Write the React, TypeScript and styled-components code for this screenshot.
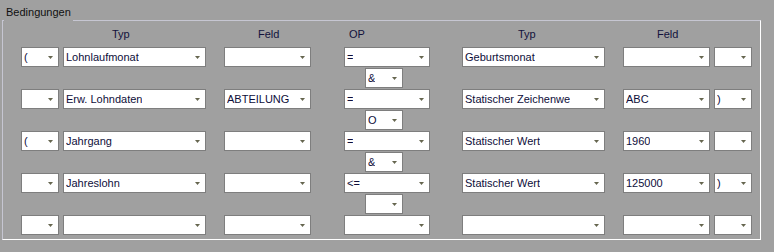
import * as React from 'react';
import styled, { createGlobalStyle } from 'styled-components';

const GlobalStyle = createGlobalStyle`
  html, body {
    margin: 0;
    padding: 0;
    background: #a0a0a0;
  }
  body {
    font-family: 'Liberation Sans', Arial, sans-serif;
    font-size: 11px;
  }
`;

const Page = styled.div`
  width: 774px;
  height: 252px;
  padding: 20px 0 0 2px;
  box-sizing: border-box;
  background: #a0a0a0;
`;

const GroupBox = styled.section`
  position: relative;
  width: 759px;
  height: 220px;
  box-sizing: border-box;
  border-top: 1px solid #c6c6d2;
  border-left: 1px solid #c6c6d2;
  border-right: 1px solid #ffffff;
  border-bottom: 1px solid #ffffff;
  padding-top: 7px;
`;

const GroupTitle = styled.div`
  position: absolute;
  top: -15px;
  left: 1px;
  padding: 0 2px 3px 2px;
  line-height: 13px;
  color: #101010;
  background: #a0a0a0;
`;

const HeaderRow = styled.div`
  display: flex;
  height: 13px;
  margin-bottom: 6px;
`;

const HeaderCell = styled.div<{ $w: number; $ml: number; $indent: number }>`
  width: ${(p) => p.$w}px;
  margin-left: ${(p) => p.$ml}px;
  padding-left: ${(p) => p.$indent}px;
  box-sizing: border-box;
  line-height: 13px;
  color: #12123c;
  white-space: nowrap;
`;

const Rows = styled.div`
  display: flex;
  flex-direction: column;
  gap: 1px;
`;

const Row = styled.div`
  display: flex;
  height: 20px;
`;

const Combo = styled.div<{ $w: number; $ml: number }>`
  position: relative;
  width: ${(p) => p.$w}px;
  margin-left: ${(p) => p.$ml}px;
  height: 20px;
  box-sizing: border-box;
  border: 1px solid #7e7e7e;
  background: #ffffff;
  display: flex;
  align-items: center;
  padding: 0 14px 1px 2px;
`;

const ComboText = styled.span`
  color: #0e0e3a;
  line-height: 14px;
  white-space: nowrap;
  overflow: hidden;
`;

const Arrow = styled.svg`
  position: absolute;
  right: 5px;
  top: 8px;
  width: 5px;
  height: 3px;
`;

type Col = { w: number; ml: number; indent: number; header: string };

const columns: Col[] = [
  { w: 38, ml: 18, indent: 0, header: '' },
  { w: 143, ml: 4, indent: 49, header: 'Typ' },
  { w: 87, ml: 18, indent: 34, header: 'Feld' },
  { w: 86, ml: 33, indent: 5, header: 'OP' },
  { w: 143, ml: 32, indent: 56, header: 'Typ' },
  { w: 87, ml: 18, indent: 34, header: 'Feld' },
  { w: 38, ml: 4, indent: 0, header: '' },
];

const conditions: string[][] = [
  ['(', 'Lohnlaufmonat', '', '=', 'Geburtsmonat', '', ''],
  ['', 'Erw. Lohndaten', 'ABTEILUNG', '=', 'Statischer Zeichenwe', 'ABC', ')'],
  ['(', 'Jahrgang', '', '=', 'Statischer Wert', '1960', ''],
  ['', 'Jahreslohn', '', '<=', 'Statischer Wert', '125000', ')'],
  ['', '', '', '', '', '', ''],
];

const links = ['&', 'O', '&', ''];

const DropDown: React.FC<{ w: number; ml: number; value: string }> = ({
  w,
  ml,
  value,
}) => (
  <Combo $w={w} $ml={ml}>
    <ComboText>{value}</ComboText>
    <Arrow viewBox="0 0 5 3">
      <polygon points="0,0 5,0 2.5,3" fill="#66664f" />
    </Arrow>
  </Combo>
);

export default function App() {
  return (
    <Page>
      <GlobalStyle />
      <GroupBox>
        <GroupTitle>Bedingungen</GroupTitle>
        <HeaderRow>
          {columns.map((c, i) => (
            <HeaderCell key={i} $w={c.w} $ml={c.ml} $indent={c.indent}>
              {c.header}
            </HeaderCell>
          ))}
        </HeaderRow>
        <Rows>
          {conditions.map((row, r) => (
            <React.Fragment key={r}>
              <Row>
                {row.map((value, i) => (
                  <DropDown
                    key={i}
                    w={columns[i].w}
                    ml={columns[i].ml}
                    value={value}
                  />
                ))}
              </Row>
              {r < links.length && (
                <Row>
                  <DropDown w={38} ml={362} value={links[r]} />
                </Row>
              )}
            </React.Fragment>
          ))}
        </Rows>
      </GroupBox>
    </Page>
  );
}
